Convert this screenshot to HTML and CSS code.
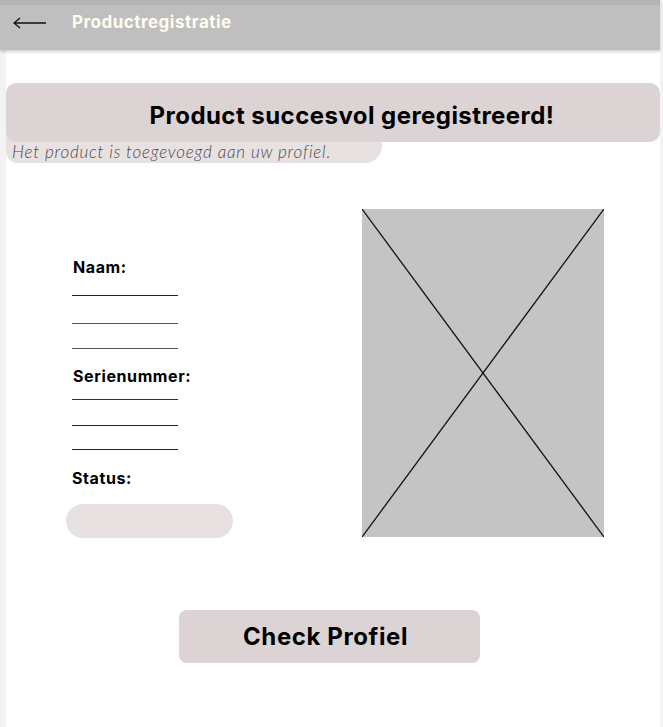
FILE: index.html
```html
<!DOCTYPE html>
<html lang="nl">
<head>
  <meta charset="UTF-8">
  <meta name="viewport" content="width=device-width, initial-scale=1.0">
  <title>Productregistratie</title>
  <link rel="stylesheet" href="styles.css">
</head>
<body>
  <div class="screen">
    <header class="topbar">
      <svg class="back" width="34" height="12" viewBox="0 0 34 12">
        <path d="M1 6 H33 M7 1 L1 6 L7 11" fill="none" stroke="#111" stroke-width="1.3"/>
      </svg>
      <span class="topbar-title">Productregistratie</span>
    </header>

    <div class="notice">
      <div class="notice-sub">Het product is toegevoegd aan uw profiel.</div>
      <h1 class="notice-title">Product succesvol geregistreerd!</h1>
    </div>

    <div class="main">
      <div class="details">
        <div class="label label-first">Naam:</div>
        <div class="line l1"></div>
        <div class="line l2"></div>
        <div class="line l3"></div>
        <div class="label label-serial">Serienummer:</div>
        <div class="line l4"></div>
        <div class="line l5"></div>
        <div class="line l6"></div>
        <div class="label label-status">Status:</div>
        <div class="status-pill"></div>
      </div>
      <div class="photo">
        <svg width="242" height="328" viewBox="0 0 242 328" preserveAspectRatio="none">
          <line x1="0" y1="0" x2="242" y2="328" stroke="#111" stroke-width="1.3"/>
          <line x1="242" y1="0" x2="0" y2="328" stroke="#111" stroke-width="1.3"/>
        </svg>
      </div>
    </div>

    <button class="check-btn">Check Profiel</button>
  </div>
</body>
</html>
```

FILE: styles.css
```css
body {
  margin: 0;
  background-color: #f3f3f3;
  font-family: Inter, "Noto Sans", sans-serif;
  color: #000;
}
.screen {
  margin-left: 6px;
  width: 654px;
  min-height: 727px;
  background-color: #fff;
}
.topbar {
  display: flex;
  align-items: flex-start;
  height: 45px;
  border-top: 5px solid #b5b5b5;
  background-color: #bfbfbf;
  box-shadow: 0 2px 3px rgba(0, 0, 0, 0.18);
  margin-left: -6px;
  padding-left: 13px;
  width: 647px;
}
.back {
  display: block;
  margin-top: 12px;
}
.topbar-title {
  margin-left: 25px;
  margin-top: 6px;
  font-size: 17px;
  line-height: 22px;
  font-weight: 700;
  color: #fffdf0;
  letter-spacing: 0.5px;
}
.notice {
  position: relative;
  margin-top: 33px;
  height: 80px;
}
.notice-title {
  position: relative;
  margin: 0;
  height: 59px;
  line-height: 66px;
  background-color: #dcd3d4;
  border-radius: 10px;
  font-size: 24px;
  font-weight: 700;
  text-align: center;
  padding-left: 38px;
  letter-spacing: 0.45px;
}
.notice-sub {
  position: absolute;
  left: 0;
  top: 45px;
  width: 376px;
  height: 35px;
  box-sizing: border-box;
  padding: 14px 0 0 6px;
  background-color: #e8e1e1;
  border-radius: 0 0 17px 12px;
  font-family: Lato, sans-serif;
  font-style: italic;
  font-weight: 300;
  font-size: 17px;
  line-height: 20px;
  color: #4a4a4a;
  letter-spacing: 0.8px;
}
.main {
  display: flex;
  margin-top: 46px;
}
.details {
  width: 290px;
  padding-left: 60px;
}
.label {
  font-size: 16px;
  font-weight: 700;
  line-height: 20px;
  margin-left: 7px;
  letter-spacing: 0.6px;
}
.label-first {
  margin-top: 48px;
}
.line {
  width: 106px;
  border-top: 1px solid #222;
  margin-left: 6px;
}
.l1 { margin-top: 18px; }
.l2 { margin-top: 27px; border-color: #555; }
.l3 { margin-top: 24px; border-color: #555; }
.label-serial { margin-top: 17px; }
.l4 { margin-top: 13px; border-color: #333; }
.l5 { margin-top: 25px; }
.l6 { margin-top: 23px; }
.label-status {
  margin-top: 18px;
  margin-left: 6px;
}
.status-pill {
  margin-top: 16px;
  width: 167px;
  height: 34px;
  background-color: #e8e1e1;
  border-radius: 17px;
}
.photo {
  width: 242px;
  height: 328px;
  margin-left: 6px;
  background-color: #c4c4c4;
}
.photo svg {
  display: block;
}
.check-btn {
  display: block;
  margin: 72px 0 0 173px;
  width: 301px;
  height: 53px;
  padding: 0 8px 0 0;
  border: none;
  border-radius: 8px;
  background-color: #dcd3d4;
  font-family: Inter, "Noto Sans", sans-serif;
  font-size: 24px;
  font-weight: 700;
  letter-spacing: 0.6px;
  color: #000;
  cursor: pointer;
}
```
